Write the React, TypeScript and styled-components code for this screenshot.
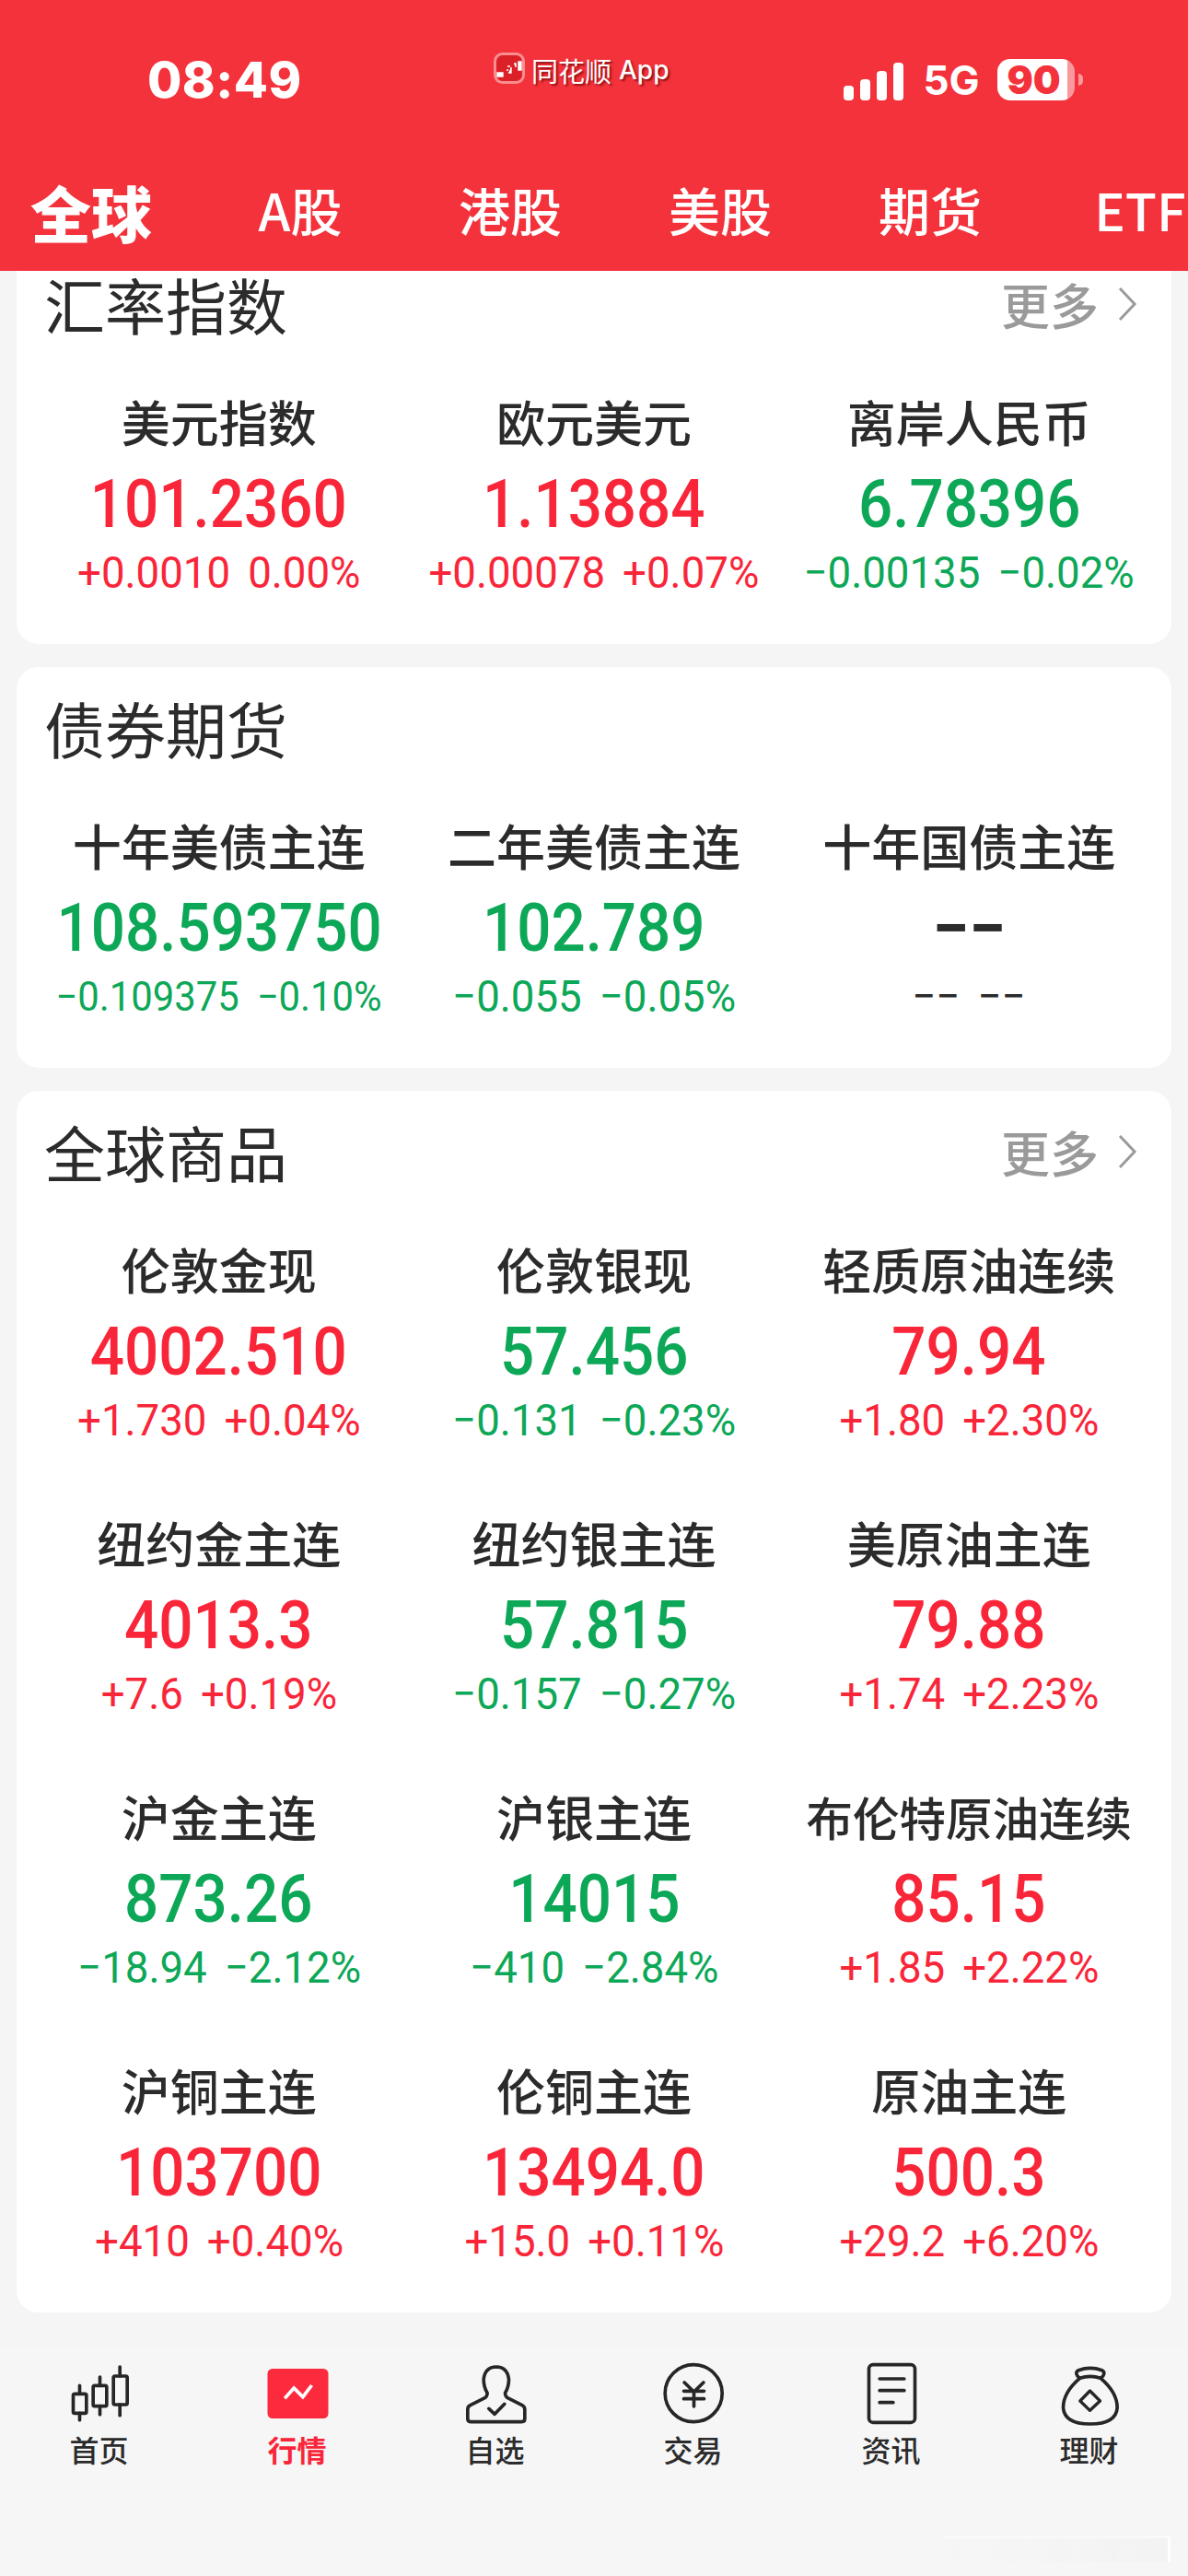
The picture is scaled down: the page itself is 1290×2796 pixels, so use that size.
import React from 'react';
import styled, {createGlobalStyle} from 'styled-components';

/* -------------------------------------------------------------------------- */
/*                                   Styles                                   */
/* -------------------------------------------------------------------------- */
const CJK = `'Noto Sans CJK SC', 'Noto Sans', sans-serif`;
const INK = '#2b2b2b';
const RED = '#f92539';
const GREEN = '#0ca757';
const HEADER_RED = '#f3323b';

const toneColor = {up: RED, down: GREEN, flat: INK};
type Tone = keyof typeof toneColor;

const GlobalStyle = createGlobalStyle`
  html, body {
    margin: 0;
    padding: 0;
    background: #f5f5f5;
  }
`;

const Screen = styled.div`
  position: relative;
  width: 1290px;
  height: 2796px;
  overflow: hidden;
  background: #f5f5f5;
  font-family: ${CJK};
  color: ${INK};
`;

const Header = styled.header`
  height: 294px;
  background: ${HEADER_RED};
  color: #fff;
`;

const StatusBar = styled.div`
  display: flex;
  height: 175px;
  padding-left: 160px;
`;

const Time = styled.div`
  width: 376px;
  padding-top: 55px;
  font: 800 54px/64px Inter, sans-serif;
  letter-spacing: 0.5px;
`;

const AppLabel = styled.div`
  display: flex;
  align-items: center;
  gap: 7px;
  width: 380px;
  height: 34px;
  margin-top: 59px;
  font-size: 29px;
  line-height: 34px;
  text-shadow: 2px 2px 2px rgba(90, 0, 0, 0.65);
`;

const AppLogo = styled.svg`
  width: 34px;
  height: 34px;
  flex: none;
  margin-top: -4px;
`;

const AppLatin = styled.span`
  font-family: Inter, sans-serif;
  font-size: 28px;
  font-weight: 500;
  margin-left: 1px;
`;

const Indicators = styled.div`
  display: flex;
  align-items: flex-end;
  height: 45px;
  margin-top: 64px;
`;

const Signal = styled.div`
  display: flex;
  align-items: flex-end;
  gap: 7.5px;
  height: 43px;
`;

const SignalBar = styled.span<{$height: number}>`
  width: 10.5px;
  height: ${({$height}) => $height}px;
  border-radius: 4px;
  background: #fff;
`;

const Network = styled.div`
  width: 80px;
  margin-left: 22px;
  font: 700 44px/44px Inter, sans-serif;
  white-space: nowrap;
`;

const Battery = styled.div`
  position: relative;
  width: 84px;
  height: 45px;
  border-radius: 14px;
  background: linear-gradient(to right, #fff 90%, rgba(255, 255, 255, 0.5) 90%);
  color: ${HEADER_RED};
  font: 900 42px/45px Inter, sans-serif;
  text-align: center;
  text-indent: -4px;

  &::after {
    content: '';
    position: absolute;
    top: 16px;
    right: -9px;
    width: 5px;
    height: 13px;
    border-radius: 0 6px 6px 0;
    background: rgba(255, 255, 255, 0.5);
  }
`;

const Tabs = styled.nav`
  display: flex;
  align-items: center;
  height: 104px;
  padding-left: 33px;
  overflow: hidden;
  white-space: nowrap;
`;

const ActiveTab = styled.div`
  flex: none;
  width: 132px;
  margin-right: 47px;
  margin-top: 4px;
  font-size: 66px;
  font-weight: 900;
  line-height: 80px;
`;

const Tab = styled.div`
  flex: none;
  width: 228px;
  font-size: 56px;
  font-weight: 500;
  line-height: 70px;
  text-align: center;
`;

const Cards = styled.main`
  display: flex;
  flex-direction: column;
  gap: 25px;
  padding: 0 18px;
`;

const Card = styled.section<{$clipped?: boolean}>`
  padding: ${({$clipped}) => ($clipped ? '0' : '30px')} 16px 50px;
  border-radius: ${({$clipped}) => ($clipped ? '0 0 24px 24px' : '24px')};
  background: #fff;
`;

const CardHeader = styled.div`
  display: flex;
  align-items: center;
  justify-content: space-between;
  height: 75px;
  margin: -2px 0 60px;
  padding: 0 21px 0 14px;
`;

const CardTitle = styled.h2`
  margin: 0;
  font-size: 66px;
  font-weight: 400;
  line-height: 75px;
`;

const More = styled.div`
  display: flex;
  align-items: center;
  gap: 20px;
  color: #9a9a9a;
  font-size: 53px;
  font-weight: 500;

  svg {
    width: 22px;
    height: 40px;
  }
`;

const Quotes = styled.div`
  display: grid;
  grid-template-columns: repeat(3, 1fr);
  row-gap: 75px;
`;

const Quote = styled.div`
  display: flex;
  flex-direction: column;
  align-items: center;
  height: 222px;
  white-space: nowrap;
`;

const QuoteName = styled.div<{$long: boolean}>`
  font-size: ${({$long}) => ($long ? '50.5px' : '53px')};
  font-weight: 500;
  line-height: 60px;
`;

const QuotePrice = styled.div<{$tone: Tone}>`
  margin-top: 16px;
  color: ${({$tone}) => toneColor[$tone]};
  font: ${({$tone}) => ($tone === 'flat' ? 700 : 500)} 72px/90px Roboto, sans-serif;
  transform: scaleX(${({$tone}) => ($tone === 'flat' ? 1 : 0.91)});
`;

const QuoteChange = styled.div<{$tone: Tone; $small: boolean}>`
  display: flex;
  gap: 20px;
  height: 54px;
  margin-top: 2px;
  color: ${({$tone}) => toneColor[$tone]};
  font: 400 ${({$small}) => ($small ? '44px' : '48px')}/54px Roboto, sans-serif;
  transform: scaleX(0.95);
`;

const BottomNav = styled.nav`
  display: grid;
  grid-template-columns: repeat(6, 215px);
  margin-top: 38px;
  padding-top: 14px;
  background: #f6f6f6;
  height: 248px;
`;

const NavItem = styled.div<{$active?: boolean}>`
  display: flex;
  flex-direction: column;
  align-items: center;
  color: ${({$active}) => ($active ? RED : INK)};
  font-size: 32px;
  font-weight: ${({$active}) => ($active ? 700 : 500)};
  line-height: 48px;
`;

const NavGlyph = styled.svg`
  width: 80px;
  height: 72px;
  fill: none;
  stroke: #262626;
  stroke-width: 11;
  stroke-linecap: round;
  stroke-linejoin: round;
`;

const Smudge = styled.div`
  position: absolute;
  left: 1025px;
  top: 2753px;
  width: 243px;
  height: 26px;
  border-top: 2px solid rgba(255, 255, 255, 0.6);
  border-right: 3px solid rgba(255, 255, 255, 0.9);
  background: linear-gradient(to right, rgba(240, 240, 240, 0), rgba(240, 240, 240, 0.5));
`;

/* -------------------------------------------------------------------------- */
/*                                    Data                                    */
/* -------------------------------------------------------------------------- */
interface QuoteData {
  name: string;
  price: string;
  change: string;
  percent: string;
  tone: Tone;
}

const q = (name: string, price: string, change: string, percent: string, tone: Tone): QuoteData => ({
  name,
  price,
  change,
  percent,
  tone,
});

const forex = [
  q('美元指数', '101.2360', '+0.0010', '0.00%', 'up'),
  q('欧元美元', '1.13884', '+0.00078', '+0.07%', 'up'),
  q('离岸人民币', '6.78396', '−0.00135', '−0.02%', 'down'),
];

const bonds = [
  q('十年美债主连', '108.593750', '−0.109375', '−0.10%', 'down'),
  q('二年美债主连', '102.789', '−0.055', '−0.05%', 'down'),
  q('十年国债主连', '−−', '−−', '−−', 'flat'),
];

const commodities = [
  q('伦敦金现', '4002.510', '+1.730', '+0.04%', 'up'),
  q('伦敦银现', '57.456', '−0.131', '−0.23%', 'down'),
  q('轻质原油连续', '79.94', '+1.80', '+2.30%', 'up'),
  q('纽约金主连', '4013.3', '+7.6', '+0.19%', 'up'),
  q('纽约银主连', '57.815', '−0.157', '−0.27%', 'down'),
  q('美原油主连', '79.88', '+1.74', '+2.23%', 'up'),
  q('沪金主连', '873.26', '−18.94', '−2.12%', 'down'),
  q('沪银主连', '14015', '−410', '−2.84%', 'down'),
  q('布伦特原油连续', '85.15', '+1.85', '+2.22%', 'up'),
  q('沪铜主连', '103700', '+410', '+0.40%', 'up'),
  q('伦铜主连', '13494.0', '+15.0', '+0.11%', 'up'),
  q('原油主连', '500.3', '+29.2', '+6.20%', 'up'),
];

/* -------------------------------------------------------------------------- */
/*                                    Parts                                   */
/* -------------------------------------------------------------------------- */
const QuoteGrid: React.FC<{items: QuoteData[]}> = ({items}) => (
  <Quotes>
    {items.map(item => (
      <Quote key={item.name}>
        <QuoteName $long={item.name.length > 6}>{item.name}</QuoteName>
        <QuotePrice $tone={item.tone}>{item.price}</QuotePrice>
        <QuoteChange $tone={item.tone} $small={item.change.length > 8}>
          <span>{item.change}</span>
          <span>{item.percent}</span>
        </QuoteChange>
      </Quote>
    ))}
  </Quotes>
);

const MoreLink = () => (
  <More>
    更多
    <svg viewBox="0 0 22 40" fill="none" stroke="#9a9a9a" strokeWidth="3">
      <path d="M3 3l16 17L3 37" />
    </svg>
  </More>
);

const navItems: {label: string; viewBox: string; active?: boolean; glyph: React.ReactNode}[] = [
  {
    label: '首页',
    viewBox: '52.5 36 240 216',
    glyph: (
      <>
        <path d="M108 118V145M108 208V230M174 90V118M174 185V212M239 57V87M239 180V215" />
        <rect x="87" y="145" width="43" height="63" rx="5" />
        <rect x="152" y="118" width="44" height="67" rx="5" />
        <rect x="218" y="87" width="45" height="93" rx="5" />
      </>
    ),
  },
  {
    label: '行情',
    viewBox: '697.5 36 240 216',
    active: true,
    glyph: (
      <>
        <rect x="720" y="63" width="198" height="162" rx="16" fill="#fb2a3c" stroke="none" />
        <path d="M776 160L806 126L835 155L864 117" stroke="#fff" strokeLinecap="butt" strokeLinejoin="miter" />
      </>
    ),
  },
  {
    label: '自选',
    viewBox: '52.5 36 240 216',
    glyph: (
      <>
        <path d="M92 236H258Q268 236 268 226V195Q268 186 258 181L212 158Q204 153 204 142Q216 122 216 98Q212 58 175 57Q138 58 134 98Q134 122 146 142Q146 153 138 158L92 181Q82 186 82 195V226Q82 236 92 236Z" />
        <path d="M151 193L170 211L202 178" />
      </>
    ),
  },
  {
    label: '交易',
    viewBox: '697.5 36 240 216',
    glyph: (
      <>
        <circle cx="818" cy="143" r="93" />
        <path d="M788 108L819 138L850 108M786 136H852M786 161H852M819 138V186" />
      </>
    ),
  },
  {
    label: '资讯',
    viewBox: '82.5 36 240 216',
    glyph: (
      <>
        <rect x="129" y="50" width="150" height="188" rx="13" />
        <path d="M164 96H244M164 134H244M164 173H208" />
      </>
    ),
  },
  {
    label: '理财',
    viewBox: '727.5 36 240 216',
    glyph: (
      <>
        <path d="M816 94Q796 78 812 68Q850 54 888 68Q904 78 884 94Q850 82 816 94Z" />
        <path d="M816 94Q762 140 762 190Q766 243 850 243Q934 243 938 190Q938 140 884 94" />
        <path d="M849 135L882 168L849 199L817 168Z" strokeWidth="10" />
      </>
    ),
  },
];

/* -------------------------------------------------------------------------- */
/*                                     App                                    */
/* -------------------------------------------------------------------------- */
const App: React.FC = () => (
  <Screen>
    <GlobalStyle />
    <Header>
      <StatusBar>
        <Time>08:49</Time>
        <AppLabel>
          <AppLogo viewBox="0 0 34 34">
            <rect x="1.5" y="1.5" width="31" height="31" rx="8" fill="#dc2028" stroke="#f98d90" strokeWidth="3" />
            <path d="M4 22h3v4H4zM8 22h2v4H8zM14 19h2M15 15h3M16 22h3v-6M22 12h2v4M27 10h3v9h-3z" stroke="#fff" strokeWidth="1.4" fill="#fff" />
          </AppLogo>
          <span>同花顺</span>
          <AppLatin>App</AppLatin>
        </AppLabel>
        <Indicators>
          <Signal>
            {[16, 23, 32, 41].map(height => (
              <SignalBar key={height} $height={height} />
            ))}
          </Signal>
          <Network>5G</Network>
          <Battery>90</Battery>
        </Indicators>
      </StatusBar>
      <Tabs>
        <ActiveTab>全球</ActiveTab>
        <Tab>A股</Tab>
        <Tab>港股</Tab>
        <Tab>美股</Tab>
        <Tab>期货</Tab>
        <Tab>ETF</Tab>
      </Tabs>
    </Header>
    <Cards>
      <Card $clipped>
        <CardHeader>
          <CardTitle>汇率指数</CardTitle>
          <MoreLink />
        </CardHeader>
        <QuoteGrid items={forex} />
      </Card>
      <Card>
        <CardHeader>
          <CardTitle>债券期货</CardTitle>
        </CardHeader>
        <QuoteGrid items={bonds} />
      </Card>
      <Card>
        <CardHeader>
          <CardTitle>全球商品</CardTitle>
          <MoreLink />
        </CardHeader>
        <QuoteGrid items={commodities} />
      </Card>
    </Cards>
    <BottomNav>
      {navItems.map(item => (
        <NavItem key={item.label} $active={item.active}>
          <NavGlyph viewBox={item.viewBox}>{item.glyph}</NavGlyph>
          {item.label}
        </NavItem>
      ))}
    </BottomNav>
    <Smudge />
  </Screen>
);

export default App;
